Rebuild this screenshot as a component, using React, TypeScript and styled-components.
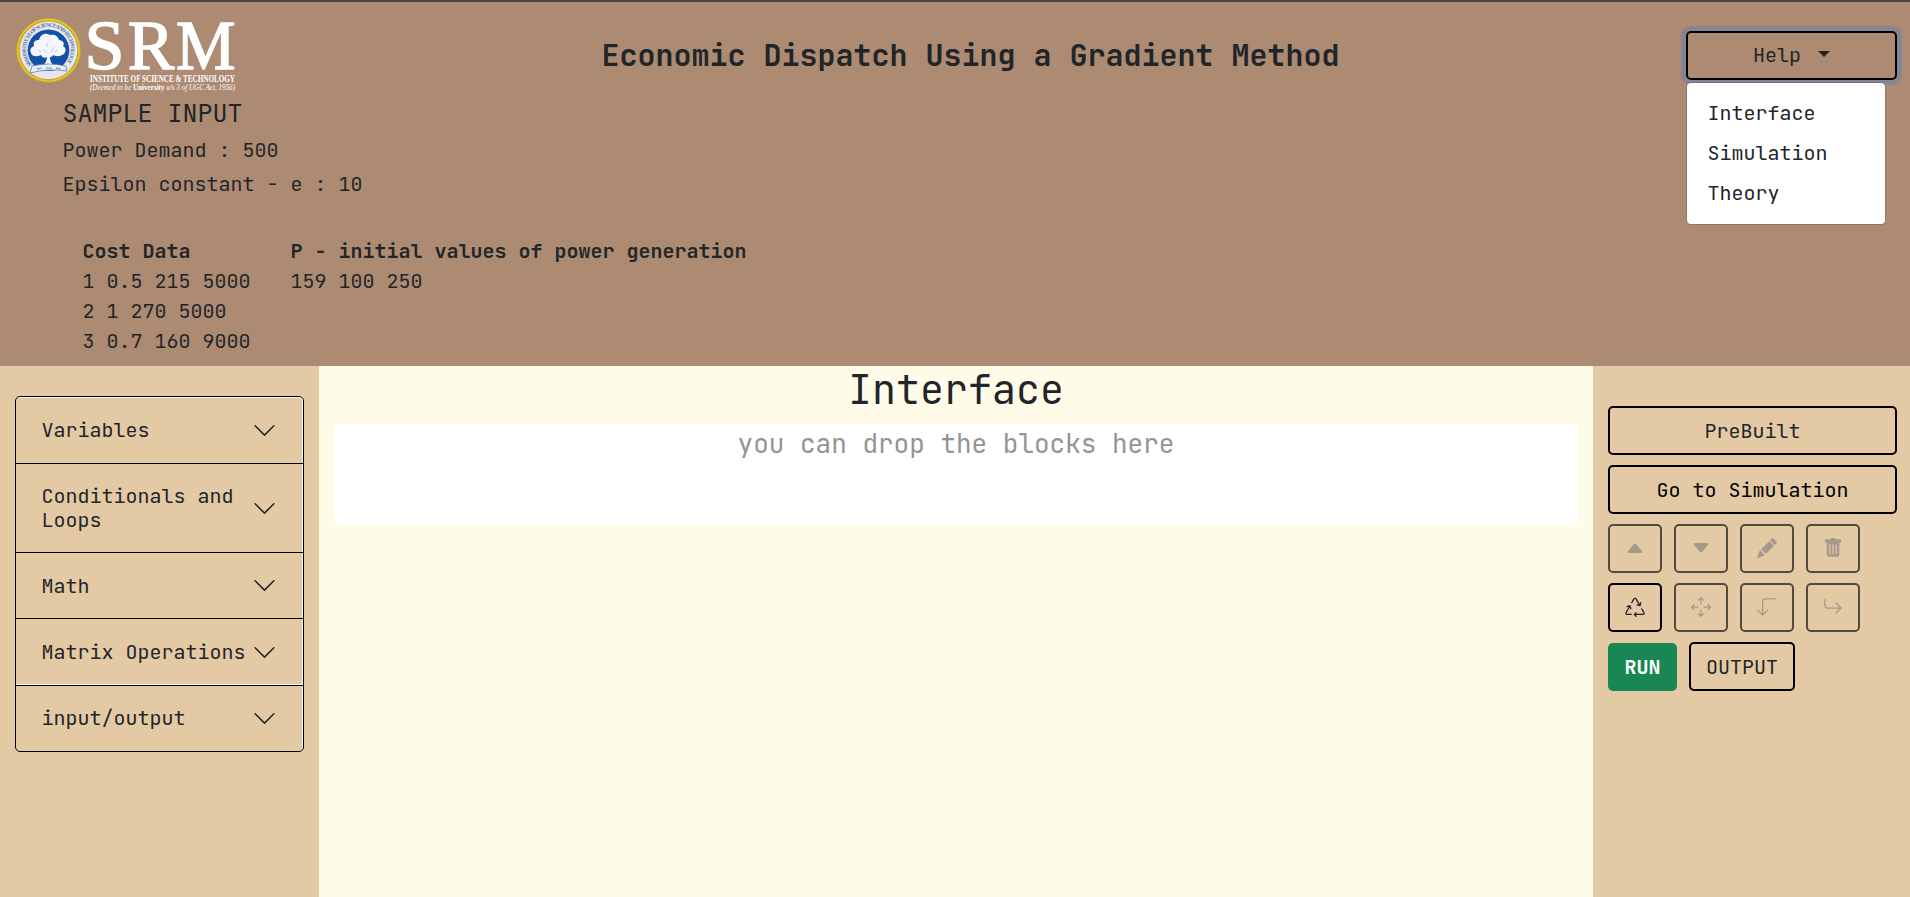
import React from 'react';
import styled, { createGlobalStyle, css } from 'styled-components';
import {
  BsArrow90DegDown,
  BsArrowReturnRight,
  BsArrowsMove,
  BsCaretDownFill,
  BsCaretUpFill,
  BsChevronDown,
  BsPencilFill,
  BsRecycle,
  BsTrashFill,
} from 'react-icons/bs';

const GlobalStyle = createGlobalStyle`
  *, *::before, *::after { box-sizing: border-box; }
  body {
    margin: 0;
    overflow: hidden;
    font-family: 'JetBrains Mono', 'DejaVu Sans Mono', monospace;
    font-size: 20px;
    line-height: 30px;
    color: #212529;
    background: #e3caa5;
  }
  h1, h2, h3, p { margin: 0; font-weight: 400; }
  button { font: inherit; color: inherit; }
`;

const Page = styled.div`
  display: flex;
  flex-direction: column;
  height: 897px;
`;

const Header = styled.header`
  display: grid;
  grid-template-columns: 319px 1fr 317px;
  grid-template-rows: 96px 1fr;
  height: 366px;
  border-top: 2px solid #45454a;
  background: #ad8b73;
`;

const Logo = styled.svg`
  display: block;
  overflow: visible;
  margin: 13px 0 0 13px;
`;

const Title = styled.h1`
  padding: 31px 0 0 29px;
  font-size: 30px;
  font-weight: 700;
  line-height: 45px;
  text-align: center;
`;

const HelpArea = styled.div`
  position: relative;
  padding: 29px 13px 0 93px;
`;

const Sample = styled.section`
  grid-column: 1 / -1;
  padding-left: 62.5px;
`;

const SampleHeading = styled.h2`
  margin-bottom: 7px;
  font-size: 25px;
  line-height: 30px;
`;

const SampleLine = styled.p`
  margin-bottom: 4px;
`;

const DataColumns = styled.div`
  display: flex;
  gap: 40px;
  padding: 33px 0 0 20px;
`;

const DataTitle = styled.p`
  font-weight: 700;
`;

const buttonBox = css`
  display: flex;
  align-items: center;
  justify-content: center;
  height: 49px;
  padding: 0;
  border: 2px solid #000;
  border-radius: 5px;
  background: transparent;
`;

const HelpButton = styled.button`
  ${buttonBox}
  width: 100%;
  gap: 17px;
  padding-bottom: 1px;
  box-shadow: 0 0 0 5px rgba(13, 110, 253, 0.25);
  &::after {
    content: '';
    margin-top: -2px;
    border: 6px solid transparent;
    border-top-color: currentColor;
    border-bottom: 0;
  }
`;

const Menu = styled.ul`
  position: absolute;
  top: 80px;
  left: 93px;
  width: 200px;
  margin: 0;
  padding: 10px 0 11px;
  list-style: none;
  color: #212529;
  background: #fff;
  background-clip: padding-box;
  border: 1px solid rgba(0, 0, 0, 0.15);
  border-radius: 5px;
`;

const MenuItem = styled.li`
  padding: 5px 20.4px;
`;

const Main = styled.main`
  display: grid;
  grid-template-columns: 319px 1fr 317px;
  flex: 1;
`;

const Sidebar = styled.aside`
  padding: 30px 15px 0;
`;

const Accordion = styled.div`
  border: 1px solid #000;
  border-radius: 5px;
  box-shadow: inset -1px 1px 0 #fff8ea;
`;

const AccordionItem = styled.div<{ $height: number; $edge?: boolean }>`
  display: flex;
  align-items: center;
  justify-content: space-between;
  height: ${(p) => p.$height}px;
  padding: 0 26px 0 25.4px;
  line-height: 24px;
  ${(p) => p.$edge && css`box-shadow: inset 0 -1px 0 #fff8ea;`}
  & + & { border-top: 1px solid #000; }
  svg { flex: none; margin-left: 6px; }
  & + & svg { margin-top: -1px; }
  &:last-child { padding-bottom: 1px; }
`;

const Workspace = styled.section`
  padding: 0 15px;
  background: #fffbe9;
  text-align: center;
`;

const WorkspaceTitle = styled.h2`
  height: 58px;
  font-size: 40px;
  line-height: 48px;
`;

const DropZone = styled.div`
  height: 100px;
  font-size: 26px;
  line-height: 39px;
  color: #949494;
  background: #fff;
`;

const Controls = styled.aside`
  display: flex;
  flex-direction: column;
  gap: 10px;
  padding: 40px 13px 0 15px;
`;

const WideButton = styled.button<{ $dark?: boolean }>`
  ${buttonBox}
  ${(p) => p.$dark && css`color: #000;`}
`;

const ButtonRow = styled.div`
  display: flex;
  gap: 12px;
`;

const IconButton = styled.button`
  ${buttonBox}
  width: 54px;
  padding-bottom: 1px;
  &:disabled {
    border-color: #524a3f;
    color: #a4998b;
  }
`;

const RunButton = styled.button`
  ${buttonBox}
  width: 69px;
  height: 48px;
  margin-top: 1px;
  border: 0;
  font-weight: 700;
  color: #fff;
  background: #198754;
`;

const OutputButton = styled.button`
  ${buttonBox}
  width: 106px;
`;

const tools = [
  [
    { name: 'Move up', Icon: BsCaretUpFill, disabled: true },
    { name: 'Move down', Icon: BsCaretDownFill, disabled: true },
    { name: 'Edit', Icon: BsPencilFill, disabled: true },
    { name: 'Delete', Icon: BsTrashFill, disabled: true },
  ],
  [
    { name: 'Reset', Icon: BsRecycle, disabled: false },
    { name: 'Move', Icon: BsArrowsMove, disabled: true },
    { name: 'Step out', Icon: BsArrow90DegDown, disabled: true },
    { name: 'Step in', Icon: BsArrowReturnRight, disabled: true },
  ],
];

const sections = [
  { label: 'Variables', height: 66 },
  { label: 'Conditionals and Loops', height: 89 },
  { label: 'Math', height: 66 },
  { label: 'Matrix Operations', height: 67, edge: true },
  { label: 'input/output', height: 66 },
];

const costRows = ['1 0.5 215 5000', '2 1 270 5000', '3 0.7 160 9000'];

function SrmLogo() {
  return (
    <Logo width="230" height="80" viewBox="13 15 230 80" fontFamily="'Liberation Serif', serif" fill="#fff">
      <defs>
        <path id="rim" d="M32 64.5A22.5 22.5 0 1 1 65 64.5" />
      </defs>
      <circle cx="48.5" cy="50.3" r="32.3" fill="#c9a526" />
      <circle cx="48.5" cy="50.3" r="30.8" fill="none" stroke="#e5c935" strokeWidth="1.4" />
      <circle cx="48.5" cy="50.3" r="28.8" fill="#e6e7ec" />
      <circle cx="48.5" cy="50.3" r="20.8" fill="#1450a5" />
      <text fontSize="5.4" fontWeight="700" fill="#5472a8">
        <textPath href="#rim" textLength="101">SRM INSTITUTE OF SCIENCE AND TECHNOLOGY</textPath>
      </text>
      <path
        d="M31 53c-2-4 1-6 3-7-1-4 1-6 5-6 1-5 6-8 11-5 5-1 8 1 9 5 4 0 6 4 4 6 4 2 3 8-1 9-3 2-7 1-9 0-1 2-2 2-3 2 0 4 1 6 5 9H42c3-2 5-5 5-9-3 2-5 0-6-2-4 2-9 2-10-2z"
        fill="#f4f6fa"
      />
      <path d="M43 49l4 4m7-6-3 5m-13-2 3 2m14 0 3-2m-11-7v4" stroke="#9db4db" strokeWidth=".7" fill="none" />
      <path d="M32 66q16-4 34 0l1 5q-18-3-37 2z" fill="#e9edf5" stroke="#4a70b4" strokeWidth=".7" />
      <path d="M37 69l5-1m4 0h6m4 0 5 1" stroke="#4a70b4" strokeWidth="1.2" strokeDasharray="1.5 .8" />
      <g fontSize="69.5" stroke="#fff" strokeWidth="1.5">
        <text x="84.5" y="68.6" textLength="40" lengthAdjust="spacingAndGlyphs">S</text>
        <text x="127.8" y="68.6" textLength="46.5" lengthAdjust="spacingAndGlyphs">R</text>
        <text x="176" y="68.6" textLength="59.5" lengthAdjust="spacingAndGlyphs">M</text>
      </g>
      <text x="90" y="81.5" fontSize="10" fontWeight="700" textLength="145" lengthAdjust="spacingAndGlyphs">
        INSTITUTE OF SCIENCE &amp; TECHNOLOGY
      </text>
      <text x="90" y="90" fontSize="7.2" fontStyle="italic" textLength="145" lengthAdjust="spacingAndGlyphs">
        (Deemed to be <tspan fontStyle="normal" fontWeight="700">University</tspan> u/s 3 of UGC Act, 1956)
      </text>
    </Logo>
  );
}

export default function App() {
  return (
    <Page>
      <GlobalStyle />
      <Header>
        <SrmLogo />
        <Title>Economic Dispatch Using a Gradient Method</Title>
        <HelpArea>
          <HelpButton>Help</HelpButton>
          <Menu>
            <MenuItem>Interface</MenuItem>
            <MenuItem>Simulation</MenuItem>
            <MenuItem>Theory</MenuItem>
          </Menu>
        </HelpArea>
        <Sample>
          <SampleHeading>SAMPLE INPUT</SampleHeading>
          <SampleLine>Power Demand : 500</SampleLine>
          <SampleLine>Epsilon constant - e : 10</SampleLine>
          <DataColumns>
            <div>
              <DataTitle>Cost Data</DataTitle>
              {costRows.map((row) => (
                <p key={row}>{row}</p>
              ))}
            </div>
            <div>
              <DataTitle>P - initial values of power generation</DataTitle>
              <p>159 100 250</p>
            </div>
          </DataColumns>
        </Sample>
      </Header>
      <Main>
        <Sidebar>
          <Accordion>
            {sections.map((s) => (
              <AccordionItem key={s.label} $height={s.height} $edge={s.edge}>
                <span>{s.label}</span>
                <BsChevronDown size={25} />
              </AccordionItem>
            ))}
          </Accordion>
        </Sidebar>
        <Workspace>
          <WorkspaceTitle>Interface</WorkspaceTitle>
          <DropZone>you can drop the blocks here</DropZone>
        </Workspace>
        <Controls>
          <WideButton>PreBuilt</WideButton>
          <WideButton $dark>Go to Simulation</WideButton>
          {tools.map((row, i) => (
            <ButtonRow key={i}>
              {row.map(({ name, Icon, disabled }) => (
                <IconButton key={name} aria-label={name} disabled={disabled}>
                  <Icon size={20} />
                </IconButton>
              ))}
            </ButtonRow>
          ))}
          <ButtonRow>
            <RunButton>RUN</RunButton>
            <OutputButton>OUTPUT</OutputButton>
          </ButtonRow>
        </Controls>
      </Main>
    </Page>
  );
}
